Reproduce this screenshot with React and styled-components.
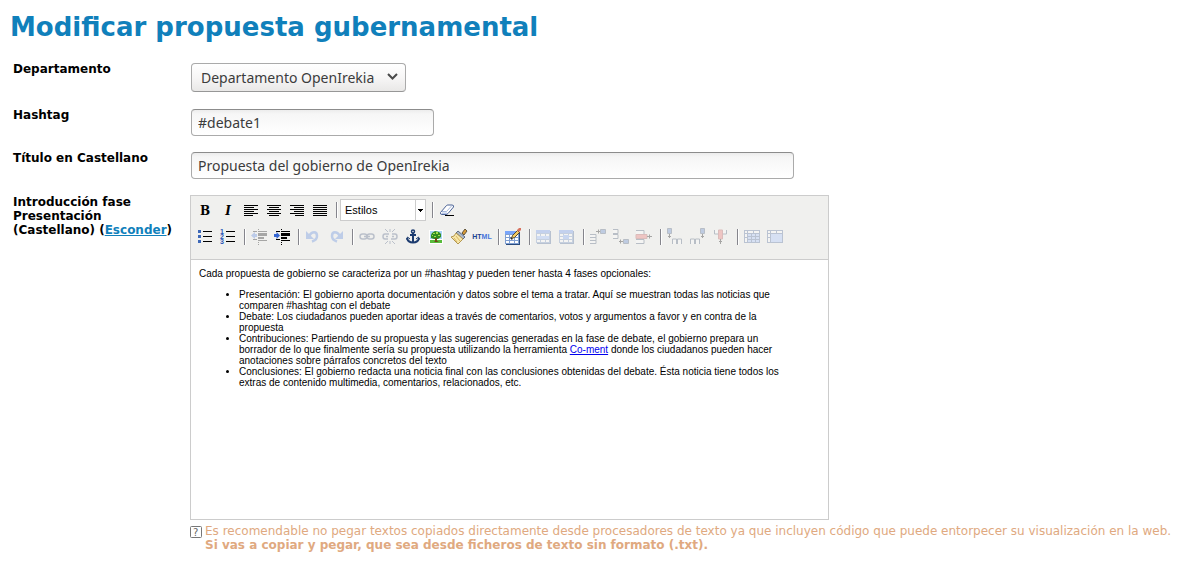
import React from "react";
import styled, { createGlobalStyle, css } from "styled-components";

const GlobalStyle = createGlobalStyle`
  body {
    margin: 0;
    background: #fff;
    color: #000;
    font: 12px/14px "DejaVu Sans", Verdana, sans-serif;
  }
  * { box-sizing: border-box; }
`;

const Page = styled.main`
  padding: 11px 8px 10px 10px;
`;

const Title = styled.h1`
  margin: 0 0 19px;
  color: #1080bb;
  font-size: 26px;
  line-height: 32px;
  font-weight: bold;
`;

const Form = styled.form`
  display: flex;
  flex-direction: column;
  gap: 15px;
  padding-left: 3px;
`;

const Row = styled.div`
  display: grid;
  grid-template-columns: 160px minmax(0, 1fr);
  column-gap: 17px;
  align-items: start;
`;

const EditorRow = styled(Row)`
  padding-top: 1px;
`;

const Label = styled.label`
  font-weight: bold;
`;

const LabelGroup = styled.div`
  font-weight: bold;
`;

const ToggleLink = styled.a`
  color: #1080bb;
  text-decoration: underline;
`;

const fieldText = css`
  color: #3c3c3c;
  font: 14px/20px "Noto Sans", "Open Sans", sans-serif;
`;

const SelectWrap = styled.div`
  position: relative;
  justify-self: start;
  margin: 1px;

  svg {
    position: absolute;
    right: 7px;
    top: 9px;
    pointer-events: none;
  }
`;

const Select = styled.select`
  ${fieldText}
  display: block;
  appearance: none;
  width: 215px;
  height: 29px;
  padding: 0 24px 0 9px;
  border: 1px solid #aaa;
  border-bottom-color: #979797;
  border-radius: 4px;
  background: linear-gradient(#fff, #f7f6f6 50%, #e9e8e7);
`;

const TextInput = styled.input`
  ${fieldText}
  width: 100%;
  max-width: ${(p) => p.$max}px;
  height: 27px;
  margin: 1px 1px 0;
  padding: 0 6px;
  border: 1px solid #aaa;
  border-top-color: #8c8c8c;
  border-radius: 4px;
  background: linear-gradient(#ececec, #f6f6f6 4px, #fff);
`;

const Editor = styled.div`
  max-width: 639px;
  border: 1px solid #ccc;
  background: #fff;
`;

const Toolbar = styled.div`
  display: flex;
  flex-direction: column;
  gap: 5px;
  padding: 3px 3px 11px;
  border-bottom: 1px solid #ccc;
  background: #f0f0ee;
`;

const ToolRow = styled.div`
  display: flex;
  align-items: center;
  height: 22px;
`;

const ToolButton = styled.button`
  display: flex;
  align-items: center;
  justify-content: center;
  flex: none;
  width: 22px;
  height: 22px;
  margin-right: 1px;
  padding: 0;
  border: 0;
  background: none;
  color: #000;

  svg { display: block; }
  &:disabled svg { opacity: 0.3; }
`;

const LetterButton = styled(ToolButton)`
  padding-top: 2px;
  font: bold 12px/20px "DejaVu Serif", serif;
`;

const HtmlText = styled.span`
  color: #1c438f;
  font: bold 7px/8px "Liberation Sans", Arial, sans-serif;

  b { color: #4474dc; }
`;

const Separator = styled.span`
  flex: none;
  width: 2px;
  height: 16px;
  margin: 0 2px 0 4px;
  border-left: 1px solid #85858c;
  background: #fff;
`;

const StyleBox = styled.div`
  position: relative;
  margin-right: 2px;

  svg {
    position: absolute;
    right: 1px;
    top: 1px;
    pointer-events: none;
  }
`;

const StyleSelect = styled.select`
  display: block;
  appearance: none;
  width: 86px;
  height: 22px;
  padding: 0 12px 0 4px;
  border: 1px solid #ccc;
  border-radius: 0;
  background: #fff;
  color: #000;
  font: 11px/20px "Liberation Sans", Arial, sans-serif;
`;

const Content = styled.div`
  min-height: 259px;
  padding: 8px;
  font: 10px/11px "Liberation Sans", Arial, sans-serif;

  p { margin: 0 0 10px; }
  ul { margin: 0; padding: 0 32px 0 40px; }
  a { color: #0000ee; }
`;

const Hint = styled.div`
  display: flex;
  align-items: flex-start;
  gap: 3px;
  margin-top: 4px;
  color: #e0a980;

  p { margin: 0; }
  svg { flex: none; margin-top: 2px; }
`;

const HelpText = styled.text`
  font: 10px "DejaVu Sans", sans-serif;
  fill: #666;
`;

const Digit = styled.text`
  font: bold 7px "Liberation Sans", sans-serif;
  fill: #2b57b5;
`;

const Svg = ({ children }) => (
  <svg width="20" height="20" viewBox="0 0 20 20" fill="none" aria-hidden="true">
    {children}
  </svg>
);

const align = (spans) => (
  <path
    stroke="#000"
    d={spans.map(([x, w], i) => `M${x} ${5.5 + i * 2}h${w}`).join("")}
  />
);

const tableBlue = "#4f77c4";
const ink = "#3b4d6b";

const indentLines = (
  <path
    d="M9 2h1v1H9zM4 4h4v1H4zM9 4h9v1H9zM9 6h9v3H9zM9 10h6v2H9zM4 12h4v1H4zM9 13h9v1H9zM9 15h1v1H9zM9 17h1v1H9z"
    fill="#000"
  />
);

const icons = {
  left: align([[3, 14], [3, 10], [3, 14], [3, 10], [3, 14], [3, 9]]),
  center: align([[3, 14], [5, 10], [3, 14], [5, 10], [3, 14], [5, 10]]),
  right: align([[3, 14], [7, 10], [3, 14], [7, 10], [3, 14], [8, 9]]),
  full: align([[3, 14], [3, 14], [3, 14], [3, 14], [3, 14], [3, 14]]),
  eraser: (
    <>
      <path d="M3.500 12.500L9.500 5.500Q10 5 11 5H15Q17 5 16.500 7L11 13.500Q10 14.500 9 14.500H5Q3 14.500 3.500 12.500Z" fill="#fff" stroke="#4a6296" />
      <path d="M5 11.500H9.500L14.500 6" stroke="#a9bbdf" />
      <path d="M5 12.500H10v1.500H5z" fill="#b9c8e8" />
      <path d="M8 15.500H17" stroke="#000" />
    </>
  ),
  bullets: (
    <>
      <path d="M3 3h3v3h-3zM3 8h3v3h-3zM3 13h3v3h-3z" fill="#3d68b8" />
      <path d="M8 4.500h9M8 9.500h9M8 14.500h9" stroke="#000" />
    </>
  ),
  numbers: (
    <>
      <Digit x="2" y="7">1</Digit>
      <Digit x="2" y="12">2</Digit>
      <Digit x="2" y="17">3</Digit>
      <path d="M8 4.500h9M8 9.500h9M8 14.500h9" stroke="#000" />
    </>
  ),
  outdent: (
    <>
      {indentLines}
      <path d="M2 8.500L6 5v2h2v3H6v2z" fill="#4b7ce0" />
    </>
  ),
  indent: (
    <>
      {indentLines}
      <path d="M8 8.500L4.500 5v2H2v3h2.500v2z" fill="#3566d2" />
    </>
  ),
  undo: (
    <>
      <path d="M6 9C9 4 14 4 14 9Q14 13 9 14.500" stroke="#4f80dc" strokeWidth="2.500" />
      <path d="M3 4v8h8z" fill="#4f80dc" />
    </>
  ),
  redo: (
    <>
      <path d="M14 9C11 4 6 4 6 9Q6 13 11 14.500" stroke="#4f80dc" strokeWidth="2.500" />
      <path d="M17 4v8H9z" fill="#4f80dc" />
    </>
  ),
  link: (
    <g stroke="#44567c" strokeWidth="1.500">
      <rect x="3" y="7" width="7" height="5" rx="2.500" />
      <rect x="10" y="7" width="7" height="5" rx="2.500" />
      <path d="M7 9.500h6" />
    </g>
  ),
  unlink: (
    <g stroke="#44567c" strokeWidth="1.500">
      <path d="M9 7H5Q3 7 3 9.500T5 12H8M12 7H15Q17 7 17 9.500T15 12H11M6 9.500h2M12 9.500h2" />
      <path d="M10 2v3M5 2l3 3M15 2l-3 3M10 14v3M5 17l3-3M15 17l-3-3" strokeWidth="1" />
    </g>
  ),
  anchor: (
    <g stroke="#1d3c70" strokeWidth="1.500">
      <circle cx="10" cy="4.500" r="1.500" />
      <path d="M10 6v10M7 8h6M4 11Q5 15.500 10 15.500T16 11" strokeWidth="2" />
      <path d="M3.500 12.500L4.500 10L7 12M16.500 12.500L15.500 10L13 12" strokeWidth="1" />
    </g>
  ),
  image: (
    <>
      <path d="M3 3h14v14H3z" fill="#fff" />
      <path d="M4 4h12v8H4z" fill="#a9d4f5" />
      <path d="M4 13h12v3H4z" fill="#58bb3c" />
      <path d="M5 8l1-2 3-2 4 1 2 2v3l-3 2H8l-3-1z" fill="#2f8d21" />
      <path d="M7 6h2v1H7zM10 5h2v2h-2zM8 9h2v1H8zM12 8h2v1h-2zM6 8h1v1H6z" fill="#a5dc4a" />
      <path d="M9 11h2v3l2 1H8l1-1z" fill="#704516" />
    </>
  ),
  cleanup: (
    <>
      <path d="M13 6l3-4 2 2-3 4z" fill="#d99a35" stroke="#63563b" />
      <path d="M9 4l7 6-2 2-7-6z" fill="#aeb8c8" stroke="#596a84" />
      <path d="M7 6l7 6-5 5-7-7 3-1z" fill="#f7e6a8" stroke="#b39750" />
      <path d="M5 11l3 4M7 9l4 5" stroke="#d8b763" />
    </>
  ),
  table: (
    <>
      <path d="M3 5h14v13H3z" fill="#284b7e" />
      <path d="M2 4h14v13H2z" fill="#7f9fd2" />
      <path d="M2 4h14v3H2z" fill="#79a5fa" />
      <path d="M3 8h3v2H3zM7 8h4v2H7zM12 8h3v2h-3zM3 11h3v2H3zM7 11h4v2H7zM12 11h3v2h-3zM3 14h3v2H3zM7 14h4v2H7zM12 14h3v2h-3z" fill="#fff" />
      <path d="M8.500 11.500l1-3 5-5 2 2-5 5z" fill="#f3cb62" stroke="#59492c" />
      <path d="M14 3l2-2h2v2l-2 2z" fill="#d8725e" />
      <path d="M8 10.500v1.500h1.500" stroke="#111" />
    </>
  ),
  rowProps: (
    <>
      <path d="M3 4h14v13H3z" fill="#35568d" />
      <path d="M2 3h14v13H2z" fill="#6788bf" />
      <path d="M2 3h14v3H2z" fill="#5d8df0" />
      <path d="M3 7h3v2H3zM7 7h4v2H7zM12 7h3v2h-3zM3 13h3v2H3zM7 13h4v2H7zM12 13h3v2h-3z" fill="#fff" />
      <path d="M3 9h12v3H3z" fill="#8db3ff" />
    </>
  ),
  cellProps: (
    <>
      <path d="M3 4h14v13H3z" fill="#35568d" />
      <path d="M2 3h14v13H2z" fill="#6788bf" />
      <path d="M2 3h14v3H2z" fill="#5d8df0" />
      <path d="M3 7h3v2H3zM7 7h4v1H7zM12 7h3v2h-3zM3 10h3v2H3zM12 10h3v2h-3zM3 13h3v2H3zM7 13h4v2H7zM12 13h3v2h-3z" fill="#fff" />
      <path d="M6 8h6v4H6z" fill="#6f9df7" />
    </>
  ),
  rowBefore: (
    <>
      <path d="M2 7.500h6v3H2M2 13.500h6v3H2M2 10.500h6v3" fill="#fff" stroke={ink} />
      <path d="M8 4.500h4M10.500 2.500v4" stroke="#000" />
      <path d="M12.500 2.500h5v4h-5z" fill={tableBlue} stroke={ink} />
    </>
  ),
  rowAfter: (
    <>
      <path d="M2 2.500h5v4H2M2 7.500h5v4H2" fill="#fff" stroke={ink} />
      <path d="M8 14.500h4M9.500 12.500v4" stroke="#000" />
      <path d="M12.500 12.500h5v4h-5z" fill={tableBlue} stroke={ink} />
    </>
  ),
  deleteRow: (
    <>
      <path d="M2 3.500h8v4H2M2 12.500h8v4H2" fill="#fff" stroke={ink} />
      <path d="M2 7.500h11v4H2z" fill="#ec6464" stroke="#ac4848" />
      <path d="M13 9.500h5M15.500 7.500v4" stroke="#000" />
    </>
  ),
  colBefore: (
    <>
      <path d="M2.500 1.500h4v5h-4z" fill={tableBlue} stroke={ink} />
      <path d="M4.500 7v4M3 9.500h3" stroke="#000" />
      <path d="M7.500 17v-5h4v5M12.500 17v-5h4v5" fill="#fff" stroke={ink} />
    </>
  ),
  colAfter: (
    <>
      <path d="M12.500 1.500h4v5h-4z" fill={tableBlue} stroke={ink} />
      <path d="M14.500 7v4M13 9.500h3" stroke="#000" />
      <path d="M2.500 17v-5h4v5M7.500 17v-5h4v5" fill="#fff" stroke={ink} />
    </>
  ),
  deleteCol: (
    <>
      <path d="M3.500 3v4h4V3M11.500 3v4h4V3" fill="#fff" stroke={ink} />
      <path d="M7.500 3v9h4V3z" fill="#ec6464" stroke="#ac4848" />
      <path d="M9.500 12v5M8 14.500h3" stroke="#000" />
    </>
  ),
  split: (
    <>
      <path d="M2 3h16v13H2z" fill="#3f5e94" />
      <path d="M3 4h2v2H3zM6 4h5v2H6zM12 4h5v2h-5zM3 7h2v3H3zM3 11h2v4H3z" fill="#fff" />
      <path d="M6 7h3v2H6zM10 7h3v2h-3zM14 7h3v2h-3zM6 10h3v2H6zM10 10h3v2h-3zM14 10h3v2h-3zM6 13h3v2H6zM10 13h3v2h-3zM14 13h3v2h-3z" fill="#9bbcff" />
    </>
  ),
  merge: (
    <>
      <path d="M2 3h16v13H2z" fill="#3f5e94" />
      <path d="M3 4h2v2H3zM6 4h5v2H6zM12 4h5v2h-5zM3 7h2v3H3zM3 11h2v4H3z" fill="#fff" />
      <path d="M6 7h11v8H6z" fill="#9bbcff" />
    </>
  ),
};

const Tool = ({ icon, label, disabled }) => (
  <ToolButton type="button" aria-label={label} disabled={disabled}>
    <Svg>{icons[icon]}</Svg>
  </ToolButton>
);

const toolGroups = [
  [["bullets", "Lista"], ["numbers", "Lista numerada"]],
  [["outdent", "Reducir sangría", true], ["indent", "Aumentar sangría"]],
  [["undo", "Deshacer", true], ["redo", "Rehacer", true]],
  [
    ["link", "Insertar enlace", true],
    ["unlink", "Quitar enlace", true],
    ["anchor", "Ancla"],
    ["image", "Imagen"],
    ["cleanup", "Limpiar código"],
    ["html", "Editar código"],
  ],
  [["table", "Insertar tabla"]],
  [["rowProps", "Propiedades de fila", true], ["cellProps", "Propiedades de celda", true]],
  [
    ["rowBefore", "Insertar fila antes", true],
    ["rowAfter", "Insertar fila después", true],
    ["deleteRow", "Eliminar fila", true],
  ],
  [
    ["colBefore", "Insertar columna antes", true],
    ["colAfter", "Insertar columna después", true],
    ["deleteCol", "Eliminar columna", true],
  ],
  [["split", "Dividir celdas", true], ["merge", "Combinar celdas", true]],
];

export default function App() {
  return (
    <Page>
      <GlobalStyle />
      <Title>Modificar propuesta gubernamental</Title>
      <Form>
        <Row>
          <Label htmlFor="department">Departamento</Label>
          <SelectWrap>
            <Select id="department">
              <option>Departamento OpenIrekia</option>
            </Select>
            <svg width="13" height="10" viewBox="0 0 13 10" fill="none" aria-hidden="true">
              <path d="M2 2l4.500 4.500L11 2" stroke="#4a4a4a" strokeWidth="2" />
            </svg>
          </SelectWrap>
        </Row>
        <Row>
          <Label htmlFor="hashtag">Hashtag</Label>
          <TextInput id="hashtag" $max={243} defaultValue="#debate1" />
        </Row>
        <Row>
          <Label htmlFor="title">Título en Castellano</Label>
          <TextInput id="title" $max={603} defaultValue="Propuesta del gobierno de OpenIrekia" />
        </Row>
        <EditorRow>
          <LabelGroup id="intro-label">
            Introducción fase Presentación (Castellano) (<ToggleLink href="#intro">Esconder</ToggleLink>)
          </LabelGroup>
          <div>
            <Editor id="intro">
              <Toolbar>
                <ToolRow>
                  <LetterButton type="button" aria-label="Negrita">B</LetterButton>
                  <LetterButton type="button" aria-label="Cursiva"><i>I</i></LetterButton>
                  <Tool icon="left" label="Alinear a la izquierda" />
                  <Tool icon="center" label="Centrar" />
                  <Tool icon="right" label="Alinear a la derecha" />
                  <Tool icon="full" label="Justificar" />
                  <Separator />
                  <StyleBox>
                    <StyleSelect aria-label="Estilos">
                      <option>Estilos</option>
                    </StyleSelect>
                    <svg width="10" height="20" viewBox="0 0 10 20" aria-hidden="true">
                      <path d="M0 0h1v20H0z" fill="#ccc" />
                      <path d="M3 9h5v1H7v1H6v1H5v-1H4v-1H3z" fill="#000" />
                    </svg>
                  </StyleBox>
                  <Separator />
                  <Tool icon="eraser" label="Limpiar formato" />
                </ToolRow>
                <ToolRow>
                  {toolGroups.map((group, index) => (
                    <React.Fragment key={group[0][0]}>
                      {index > 0 && <Separator />}
                      {group.map(([icon, label, disabled]) =>
                        icon === "html" ? (
                          <ToolButton key={icon} type="button" aria-label={label}>
                            <HtmlText>HT<b>ML</b></HtmlText>
                          </ToolButton>
                        ) : (
                          <Tool key={icon} icon={icon} label={label} disabled={disabled} />
                        )
                      )}
                    </React.Fragment>
                  ))}
                </ToolRow>
              </Toolbar>
              <Content contentEditable suppressContentEditableWarning role="textbox" aria-multiline="true" aria-labelledby="intro-label" spellCheck={false}>
                <p>Cada propuesta de gobierno se caracteriza por un #hashtag y pueden tener hasta 4 fases opcionales:</p>
                <ul>
                  <li>Presentación: El gobierno aporta documentación y datos sobre el tema a tratar. Aquí se muestran todas las noticias que comparen #hashtag con el debate</li>
                  <li>Debate: Los ciudadanos pueden aportar ideas a través de comentarios, votos y argumentos a favor y en contra de la propuesta</li>
                  <li>Contribuciones: Partiendo de su propuesta y las sugerencias generadas en la fase de debate, el gobierno prepara un borrador de lo que finalmente sería su propuesta utilizando la herramienta <a href="#co-ment">Co-ment</a> donde los ciudadanos pueden hacer anotaciones sobre párrafos concretos del texto</li>
                  <li>Conclusiones: El gobierno redacta una noticia final con las conclusiones obtenidas del debate. Ésta noticia tiene todos los extras de contenido multimedia, comentarios, relacionados, etc.</li>
                </ul>
              </Content>
            </Editor>
            <Hint>
              <svg width="12" height="12" viewBox="0 0 12 12" fill="none" aria-hidden="true">
                <rect x="0.500" y="0.500" width="11" height="11" rx="1" stroke="#777" />
                <HelpText x="3" y="10">?</HelpText>
              </svg>
              <p>
                Es recomendable no pegar textos copiados directamente desde procesadores de texto ya que incluyen código que puede entorpecer su visualización en la web.
                <br />
                <strong>Si vas a copiar y pegar, que sea desde ficheros de texto sin formato (.txt).</strong>
              </p>
            </Hint>
          </div>
        </EditorRow>
      </Form>
    </Page>
  );
}
